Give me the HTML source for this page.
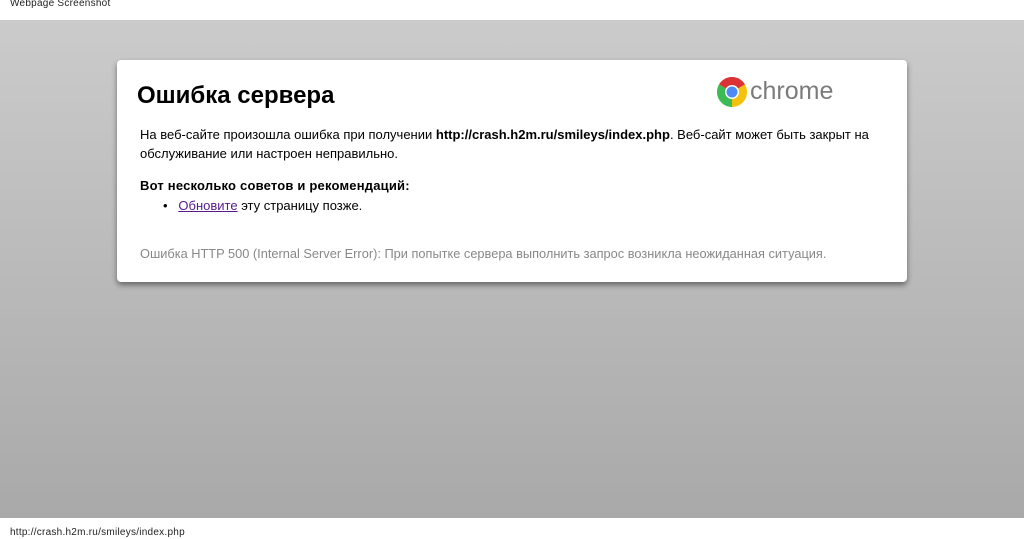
<!DOCTYPE html>
<html><head><meta charset="utf-8"><style>
html,body{margin:0;padding:0;width:1024px;height:539px;overflow:hidden;font-family:"Liberation Sans",Arial,sans-serif;background:#fff}
.top{position:absolute;left:0;top:0;width:1024px;height:20px;background:#fff;font-size:10px;color:#222;letter-spacing:0.25px}
.top span{position:absolute;left:10px;top:-2px}
.bg{position:absolute;left:0;top:20px;width:1024px;height:498px;background:linear-gradient(#cbcbcb,#a9a9a9)}
.bot{position:absolute;left:0;top:518px;width:1024px;height:21px;background:#fff;font-size:10px;color:#222;letter-spacing:0.25px}
.bot span{position:absolute;left:10px;top:9px}
.box{position:absolute;left:117px;top:60px;width:790px;height:222px;background:#fff;border-radius:4px;box-shadow:0 3px 6px rgba(0,0,0,.45)}
h1{position:absolute;left:20px;top:22px;margin:0;font-size:24px;font-weight:bold;color:#000}
.p{position:absolute;left:23px;font-size:13px;color:#000;line-height:19px;white-space:nowrap}
a{color:#551a8b;text-decoration:underline}
.logo{position:absolute;left:600px;top:17px}
.ct{position:absolute;left:633px;top:17px;font-size:25px;color:#7b7b7b}
</style></head><body>
<div class="top"><span>Webpage Screenshot</span></div>
<div class="bg"></div>
<div class="box">
<h1>Ошибка сервера</h1>
<svg class="logo" width="30" height="30" viewBox="-15 -15 30 30">
<path d="M0 0 L-13 -7.5 A15 15 0 0 1 13 -7.5 Z" fill="#db3236"/>
<path d="M0 0 L13 -7.5 A15 15 0 0 1 0 15 Z" fill="#f4c20d"/>
<path d="M0 0 L0 15 A15 15 0 0 1 -13 -7.5 Z" fill="#3cba54"/>
<circle r="7" fill="#fff"/><circle r="5.5" fill="#4c8bf5"/></svg>
<div class="ct">chrome</div>
<div class="p" style="top:65px">На веб-сайте произошла ошибка при получении <b>http://crash.h2m.ru/smileys/index.php</b>. Веб-сайт может быть закрыт на<br>обслуживание или настроен неправильно.</div>
<div class="p" style="top:116px;letter-spacing:0.2px"><b>Вот несколько советов и рекомендаций:</b></div>
<div class="p" style="top:136px;left:46px">•&nbsp;&nbsp;&nbsp;<a>Обновите</a> эту страницу позже.</div>
<div class="p" style="top:184px;color:#888;font-size:12.8px">Ошибка HTTP 500 (Internal Server Error): При попытке сервера выполнить запрос возникла неожиданная ситуация.</div>
</div>
<div class="bot"><span>http://crash.h2m.ru/smileys/index.php</span></div>
</body></html>
